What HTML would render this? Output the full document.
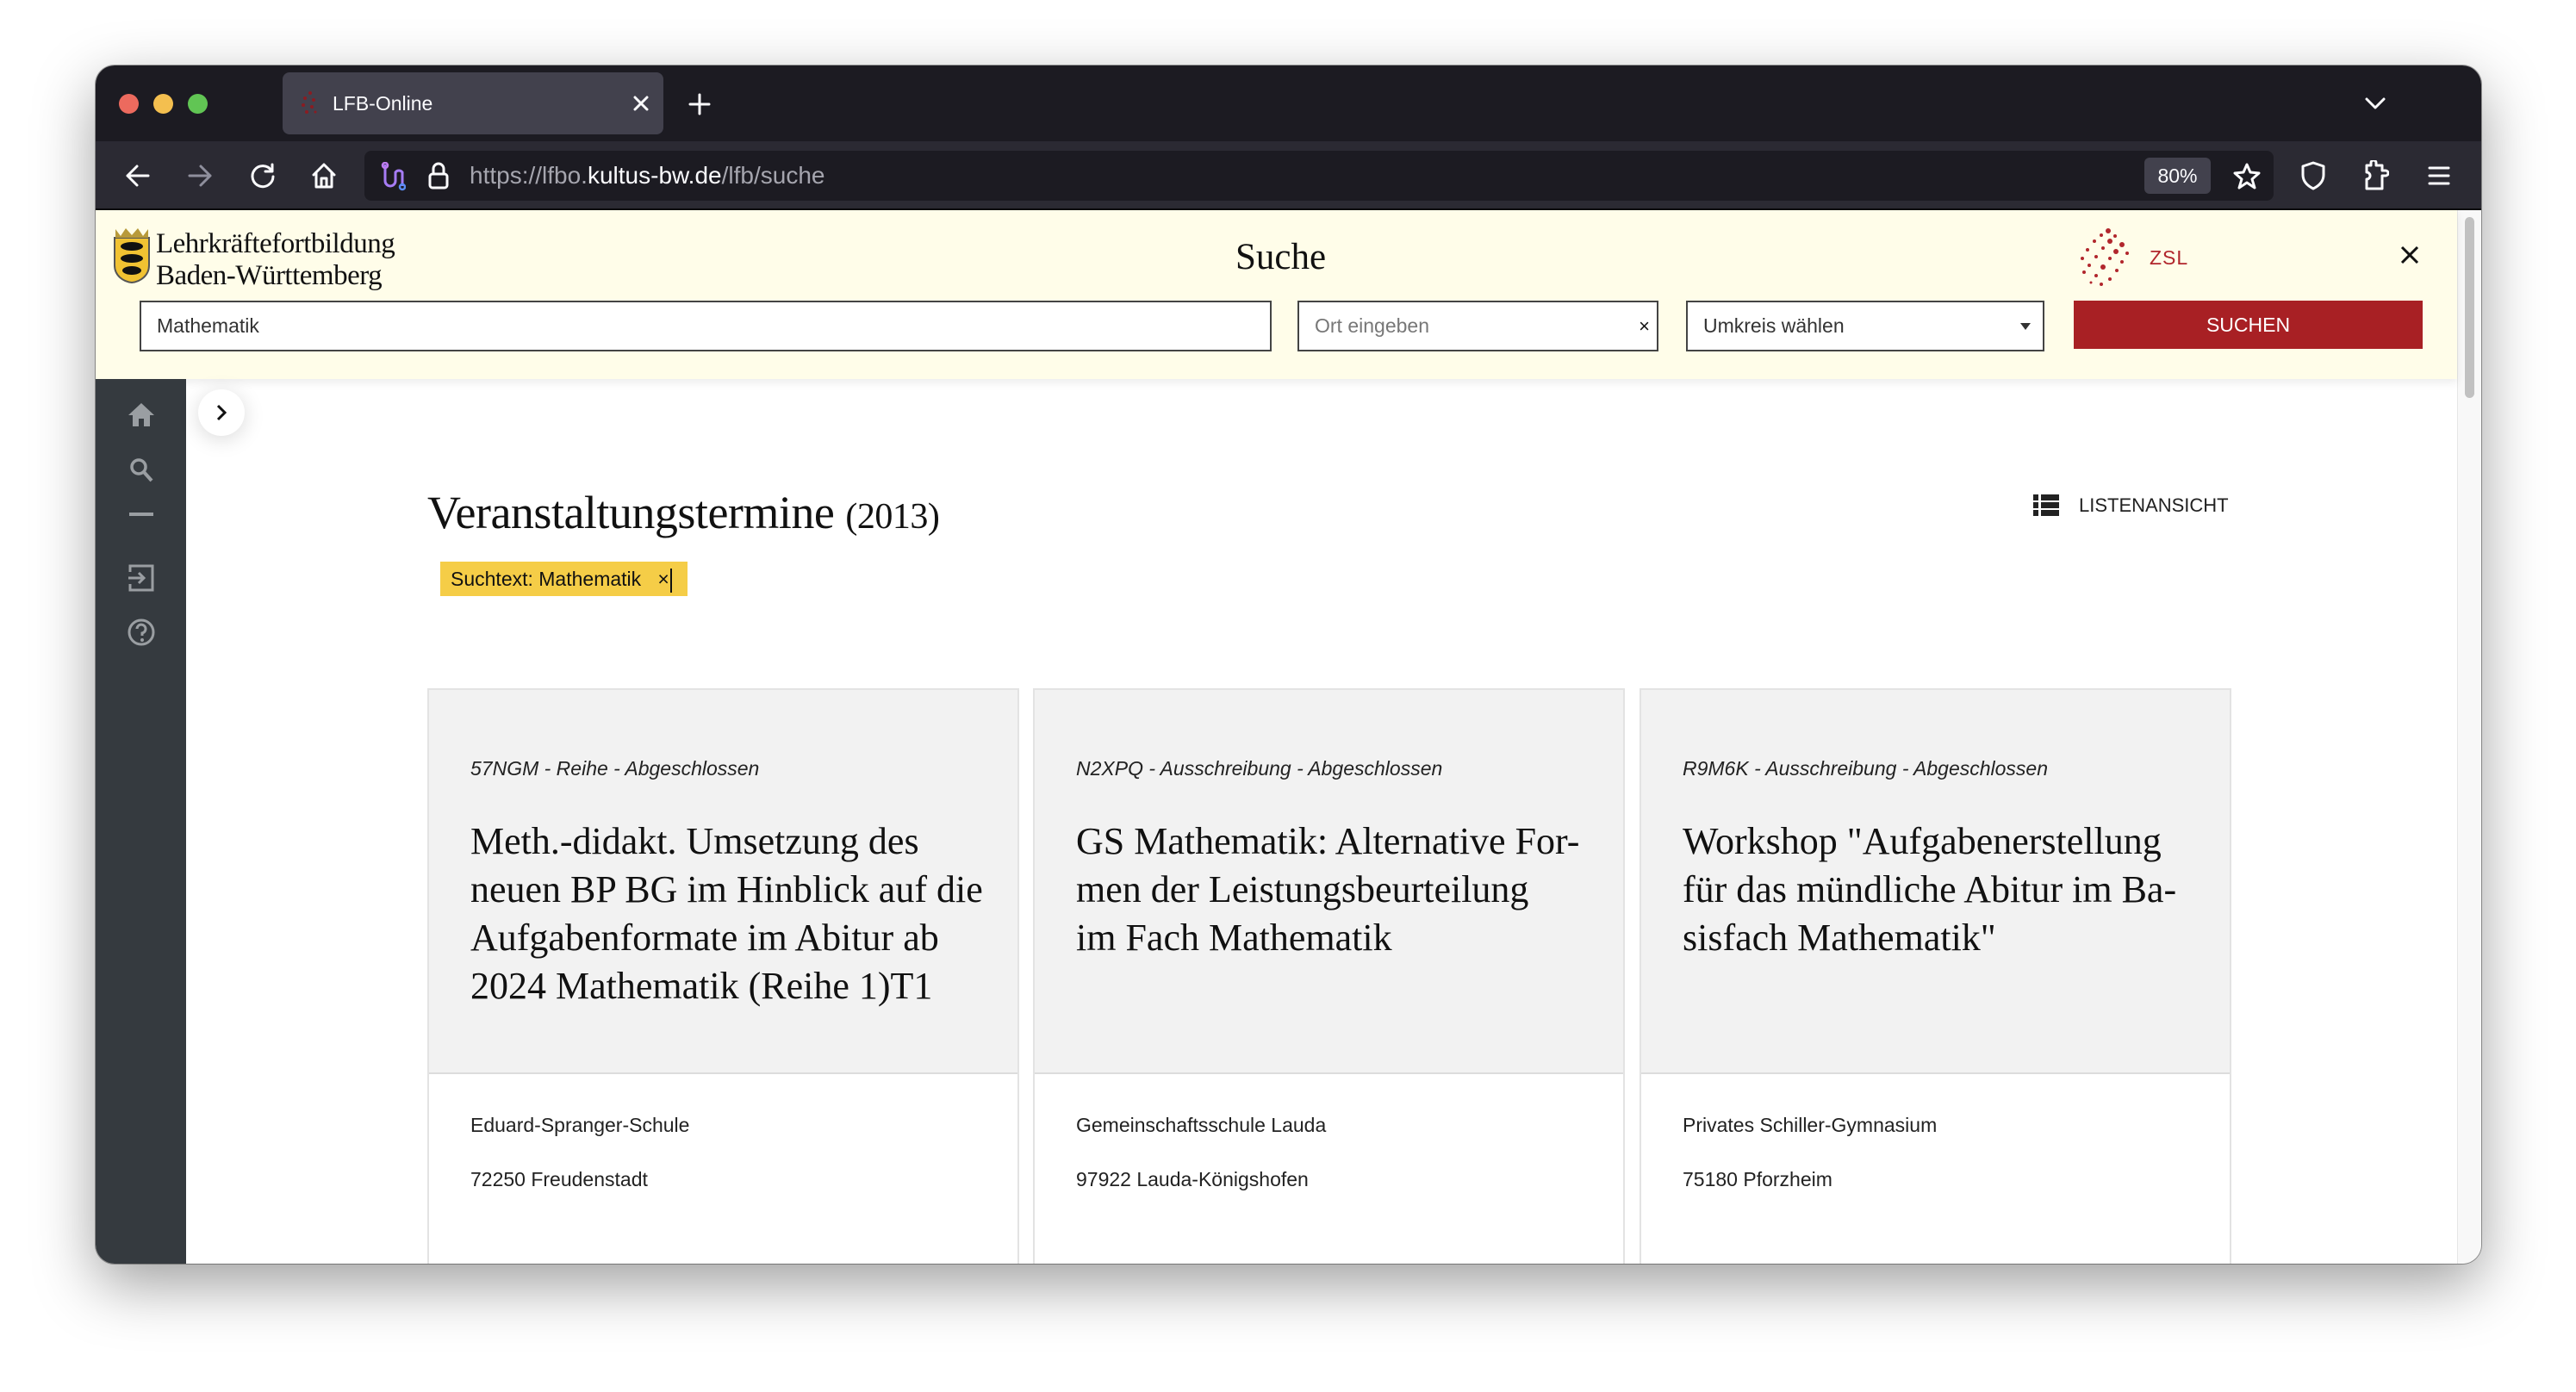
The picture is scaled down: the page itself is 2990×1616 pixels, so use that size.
<!DOCTYPE html>
<html><head><meta charset="utf-8"><style>
*{box-sizing:border-box;margin:0;padding:0}
body{width:2990px;height:1616px;background:#fff;position:relative;overflow:hidden;font-family:"Liberation Sans",sans-serif}
.win{position:absolute;left:111px;top:76px;width:2769px;height:1391px;border-radius:22px;overflow:hidden;background:#fff;box-shadow:0 24px 70px rgba(0,0,0,.38),0 0 0 1px rgba(0,0,0,.35)}
.abs{position:absolute}
.tabbar{left:0;top:0;width:100%;height:88px;background:#1c1b22}
.dot{width:23px;height:23px;border-radius:50%;top:33px}
.tab{left:217px;top:8px;width:442px;height:72px;background:#42414d;border-radius:8px}
.nav{left:0;top:88px;width:100%;height:80px;background:#2b2a33;border-bottom:2px solid #0c0c0d}
.url{left:312px;top:11px;width:2216px;height:58px;background:#1c1b22;border-radius:8px}
.ic{stroke:#fbfbfe;fill:none;stroke-width:3;stroke-linecap:round;stroke-linejoin:round}
.hdr{left:0;top:168px;width:2741px;height:196px;background:#fffde9;box-shadow:0 4px 10px rgba(0,0,0,.08)}
.serif{font-family:"Liberation Serif",serif;color:#111}
.inp{border:2px solid #444;background:#fff;height:59px;top:105px;font-size:23px;color:#333;padding-left:18px;line-height:55px}
.side{left:0;top:364px;width:105px;height:1027px;background:#353a3f}
.card{width:687px;height:720px;border:2px solid #e3e3e3;background:#fff;top:723px}
.card .g{position:absolute;left:0;top:0;width:100%;height:446px;background:#f2f2f2;border-bottom:2px solid #dcdcdc}
.meta{position:absolute;left:48px;top:78px;font-size:23px;font-style:italic;color:#222}
.ttl{position:absolute;left:48px;top:148px;font-size:44px;line-height:56px;width:600px;font-family:"Liberation Serif",serif;color:#111}
.s1{position:absolute;left:48px;top:492px;font-size:23px;color:#222}
.s2{position:absolute;left:48px;top:555px;font-size:23px;color:#222}
</style></head><body>
<div class="win">
 <div class="abs tabbar">
  <div class="abs dot" style="left:27px;background:#ec6a5e"></div>
  <div class="abs dot" style="left:67px;background:#f4bf4f"></div>
  <div class="abs dot" style="left:107px;background:#61c554"></div>
  <div class="abs tab">
   <svg class="abs" style="left:18px;top:20px" width="28" height="32"><g fill="#8a1c22"><circle cx="14" cy="4" r="2"/><circle cx="8" cy="10" r="2"/><circle cx="18" cy="12" r="2"/><circle cx="6" cy="18" r="2"/><circle cx="16" cy="20" r="2"/><circle cx="10" cy="26" r="2"/><circle cx="20" cy="26" r="1.5"/></g></svg>
   <div class="abs" style="left:58px;top:23px;font-size:23px;color:#fbfbfe">LFB-Online</div>
   <svg class="abs" style="left:406px;top:26px" width="20" height="20"><path class="ic" d="M3 3L17 17M17 3L3 17" stroke-width="2.5"/></svg>
  </div>
  <svg class="abs" style="left:688px;top:32px" width="26" height="26"><path class="ic" d="M13 2V24M2 13H24"/></svg>
  <svg class="abs" style="left:2633px;top:36px" width="26" height="16"><path class="ic" d="M3 3L13 13L23 3"/></svg>
 </div>
 <div class="abs nav">
  <svg class="abs" style="left:34px;top:25px" width="30" height="30"><path class="ic" d="M27 15H3M14 4L3 15L14 26"/></svg>
  <svg class="abs" style="left:106px;top:25px" width="30" height="30"><path class="ic" style="stroke:#8f8f9d" d="M3 15H27M16 4L27 15L16 26"/></svg>
  <svg class="abs" style="left:178px;top:24px" width="32" height="32"><path class="ic" d="M26 10A12 12 0 1 0 28 17M27 3V11H19"/></svg>
  <svg class="abs" style="left:249px;top:23px" width="32" height="34"><path class="ic" d="M4 16L16 4L28 16M7 13V30H25V13M13 30V20H19V30"/></svg>
  <div class="abs url">
   <svg class="abs" style="left:18px;top:13px" width="30" height="34"><path d="M6 3V22A6 6 0 0 0 18 22V12A5 5 0 0 1 26 12V28" fill="none" stroke="#a67cf5" stroke-width="3"/><circle cx="6" cy="4" r="3" fill="none" stroke="#c07cf0" stroke-width="2.5"/><circle cx="26" cy="29" r="3" fill="none" stroke="#5a8cf5" stroke-width="2.5"/></svg>
   <svg class="abs" style="left:73px;top:12px" width="26" height="34"><rect x="3" y="15" width="20" height="16" rx="3" class="ic"/><path class="ic" d="M7 15V9A6 6 0 0 1 19 9V15"/></svg>
   <div class="abs" style="left:122px;top:13px;font-size:28px;color:#a5a5ae;white-space:nowrap">https://lfbo.<span style="color:#fbfbfe">kultus-bw.de</span>/lfb/suche</div>
   <div class="abs" style="left:2066px;top:8px;width:77px;height:42px;background:#42414d;border-radius:6px;color:#fbfbfe;font-size:23px;text-align:center;line-height:42px">80%</div>
   <svg class="abs" style="left:2168px;top:13px" width="34" height="32"><path class="ic" d="M17 3L21 12L31 13L23 20L26 30L17 24L8 30L11 20L3 13L13 12Z" stroke-width="2.5"/></svg>
  </div>
  <svg class="abs" style="left:2559px;top:22px" width="30" height="36"><path class="ic" d="M15 3L27 7V17C27 25 21 30 15 33C9 30 3 25 3 17V7Z" stroke-width="2.5"/></svg>
  <svg class="abs" style="left:2632px;top:22px" width="30" height="36"><path class="ic" d="M4 33H22V18H26A3 3 0 0 0 26 12H22V6H15V3A3 3 0 0 0 9 3V6H4V14A3 3 0 0 1 4 22Z" stroke-width="2.5"/></svg>
  <svg class="abs" style="left:2706px;top:26px" width="28" height="28"><path class="ic" d="M3 5H25M3 14H25M3 23H25" stroke-width="2.5"/></svg>
 </div>
 <div class="abs" style="left:2741px;top:168px;width:28px;height:1223px;background:#f8f8f8;border-left:1px solid #e6e6e6"></div>
 <div class="abs" style="left:2750px;top:176px;width:11px;height:210px;background:#c1c1c1;border-radius:6px"></div>
 <div class="abs hdr">
  <svg class="abs" style="left:19px;top:18px" width="46" height="68"><path d="M3 14H43V46C43 58 33 65 23 66C13 65 3 58 3 46Z" fill="#f1c232" stroke="#555" stroke-width="2"/><path d="M4 4L10 12L16 3L23 11L30 3L36 12L42 4V14H4Z" fill="#b89a3a"/><g fill="#111"><ellipse cx="23" cy="24" rx="13" ry="5"/><ellipse cx="23" cy="38" rx="13" ry="5"/><ellipse cx="23" cy="52" rx="11" ry="5"/></g></svg>
  <div class="abs serif" style="left:70px;top:21px;font-size:33px;line-height:37px;letter-spacing:-.5px">Lehrkräftefortbildung<br>Baden-Württemberg</div>
  <div class="abs serif" style="left:1323px;top:30px;font-size:43px">Suche</div>
  <svg class="abs" style="left:2300px;top:20px" width="70" height="70"><g fill="#b1262c"><circle cx="36" cy="4" r="3"/><circle cx="28" cy="9" r="2"/><circle cx="44" cy="10" r="2"/><circle cx="20" cy="16" r="2"/><circle cx="38" cy="16" r="3"/><circle cx="52" cy="20" r="3"/><circle cx="12" cy="26" r="2"/><circle cx="30" cy="24" r="2"/><circle cx="45" cy="28" r="3"/><circle cx="58" cy="30" r="2"/><circle cx="6" cy="36" r="2"/><circle cx="22" cy="34" r="2"/><circle cx="38" cy="36" r="2"/><circle cx="52" cy="40" r="2"/><circle cx="14" cy="44" r="2"/><circle cx="30" cy="46" r="3"/><circle cx="46" cy="50" r="2"/><circle cx="8" cy="52" r="2"/><circle cx="22" cy="56" r="2"/><circle cx="38" cy="60" r="2"/><circle cx="28" cy="66" r="2"/><circle cx="16" cy="64" r="1.5"/></g></svg>
  <div class="abs" style="left:2384px;top:42px;font-size:23px;color:#b1262c;letter-spacing:1px">ZSL</div>
  <svg class="abs" style="left:2674px;top:40px" width="24" height="24"><path d="M3 3L21 21M21 3L3 21" stroke="#111" stroke-width="3"/></svg>
  <div class="abs inp" style="left:51px;width:1314px">Mathematik</div>
  <div class="abs inp" style="left:1395px;width:419px;color:#777">Ort eingeben<span class="abs" style="right:8px;top:0;color:#111;font-size:22px">×</span></div>
  <div class="abs inp" style="left:1846px;width:416px">Umkreis wählen<svg class="abs" style="right:14px;top:24px" width="12" height="8"><path d="M0 0H12L6 8Z" fill="#333"/></svg></div>
  <div class="abs" style="left:2296px;top:105px;width:405px;height:56px;background:#a82024;color:#fff;font-size:23px;text-align:center;line-height:56px">SUCHEN</div>
 </div>
 <div class="abs side">
  <svg class="abs" style="left:37px;top:26px" width="32" height="30"><path d="M16 2L31 16H26V29H19V20H13V29H6V16H1Z" fill="#9a9ea2"/></svg>
  <svg class="abs" style="left:38px;top:90px" width="30" height="32"><circle cx="12" cy="12" r="8" fill="none" stroke="#9a9ea2" stroke-width="3.5"/><path d="M18 18L27 28" stroke="#9a9ea2" stroke-width="4"/></svg>
  <div class="abs" style="left:39px;top:155px;width:28px;height:4px;background:#9a9ea2"></div>
  <svg class="abs" style="left:36px;top:214px" width="34" height="34"><path d="M4 10V3H30V31H4V24M2 17H20M14 11L20 17L14 23" fill="none" stroke="#9a9ea2" stroke-width="3"/></svg>
  <svg class="abs" style="left:36px;top:277px" width="34" height="34"><circle cx="17" cy="17" r="14" fill="none" stroke="#9a9ea2" stroke-width="3"/><path d="M12 13A5 5 0 1 1 18 18V21" fill="none" stroke="#9a9ea2" stroke-width="3"/><circle cx="18" cy="26" r="2" fill="#9a9ea2"/></svg>
  <svg class="abs" style="left:44px;top:1053px" width="16" height="24"><path d="M3 3L12 12L3 21" fill="none" stroke="#fff" stroke-width="3"/></svg>
 </div>
 <div class="abs" style="left:119px;top:376px;width:54px;height:54px;border-radius:50%;background:#fff;box-shadow:0 4px 24px rgba(0,0,0,.15)"><svg class="abs" style="left:20px;top:16px" width="14" height="22"><path d="M3 3L11 11L3 19" fill="none" stroke="#111" stroke-width="3"/></svg></div>
 <div class="abs serif" style="left:385px;top:488px;font-size:54px;white-space:nowrap;letter-spacing:-.5px">Veranstaltungstermine <span style="font-size:42px">(2013)</span></div>
 <svg class="abs" style="left:2249px;top:498px" width="30" height="26"><g fill="#222"><rect x="0" y="0" width="6" height="7"/><rect x="9" y="0" width="21" height="7"/><rect x="0" y="9" width="6" height="7"/><rect x="9" y="9" width="21" height="7"/><rect x="0" y="18" width="6" height="7"/><rect x="9" y="18" width="21" height="7"/></g></svg>
 <div class="abs" style="left:2302px;top:498px;font-size:22px;color:#222">LISTENANSICHT</div>
 <div class="abs" style="left:400px;top:576px;width:287px;height:40px;background:#f5cd47;font-size:23px;color:#111;line-height:40px;padding-left:12px">Suchtext: Mathematik &nbsp;&nbsp;×<span style="display:inline-block;width:2px;height:28px;background:#111;vertical-align:middle;margin-left:1px"></span></div>
 <div class="abs card" style="left:385px"><div class="g"></div>
  <div class="meta">57NGM - Reihe - Abgeschlossen</div>
  <div class="ttl">Meth.-didakt. Umsetzung des neuen BP BG im Hinblick auf die Aufgabenformate im Abitur ab 2024 Mathematik (Reihe 1)T1</div>
  <div class="s1">Eduard-Spranger-Schule</div><div class="s2">72250 Freudenstadt</div></div>
 <div class="abs card" style="left:1088px"><div class="g"></div>
  <div class="meta">N2XPQ - Ausschreibung - Abgeschlossen</div>
  <div class="ttl">GS Mathematik: Alternative For-<br>men der Leistungsbeurteilung<br>im Fach Mathematik</div>
  <div class="s1">Gemeinschaftsschule Lauda</div><div class="s2">97922 Lauda-Königshofen</div></div>
 <div class="abs card" style="left:1792px"><div class="g"></div>
  <div class="meta">R9M6K - Ausschreibung - Abgeschlossen</div>
  <div class="ttl">Workshop "Aufgabenerstellung<br>für das mündliche Abitur im Ba-<br>sisfach Mathematik"</div>
  <div class="s1">Privates Schiller-Gymnasium</div><div class="s2">75180 Pforzheim</div></div>
</div>
</body></html>
